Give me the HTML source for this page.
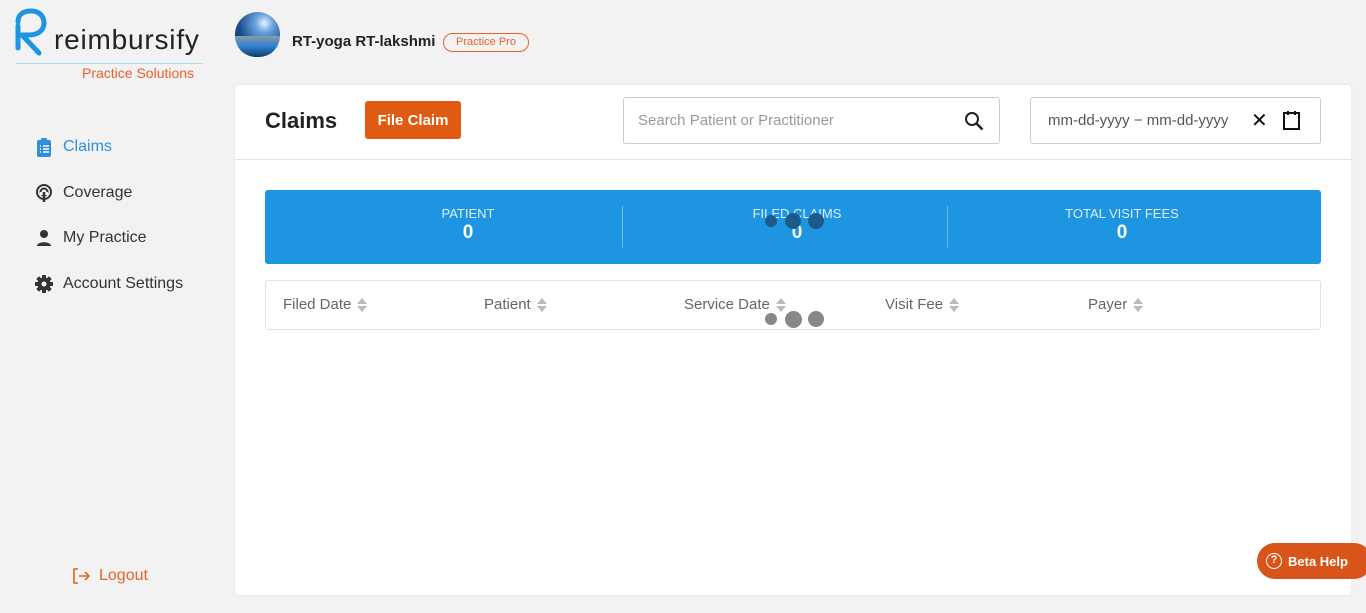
<!DOCTYPE html>
<html><head><meta charset="utf-8"><style>
*{box-sizing:border-box;margin:0;padding:0}
body{width:1366px;height:613px;background:#f2f2f2;font-family:"Liberation Sans",sans-serif;position:relative;overflow:hidden;color:#222}
.abs{position:absolute}
.nav{position:absolute;left:35px;font-size:16px;color:#333;display:flex;align-items:center}
.nav svg{margin-right:9px}
.card{position:absolute;left:235px;top:85px;width:1116px;height:510px;background:#fff;border-radius:4px;box-shadow:0 0 3px rgba(0,0,0,.08)}
.inp{position:absolute;border:1px solid #ccc;border-radius:3px;height:47px;top:97px;font-size:15px;color:#999;display:flex;align-items:center;padding-left:14px}
.stat{position:absolute;top:190px;left:265px;width:1056px;height:74px;background:#1e95e0;border-radius:3px;color:#fff}
.col{position:absolute;top:16px;width:330px;text-align:center}
.col .l{font-size:13px;color:#dbeefb}
.col .v{font-size:19px;font-weight:bold;margin-top:1px}
.th{position:absolute;top:296px;font-size:15px;color:#666;display:flex;align-items:center}
.sort{display:inline-block;margin-left:6px;width:10px;height:14px;position:relative}
.sort:before{content:"";position:absolute;top:0;left:0;border-left:5px solid transparent;border-right:5px solid transparent;border-bottom:6px solid #bbb}
.sort:after{content:"";position:absolute;bottom:0;left:0;border-left:5px solid transparent;border-right:5px solid transparent;border-top:6px solid #bbb}
.dot{position:absolute;border-radius:50%}
</style></head><body>
<!-- logo -->
<svg class="abs" style="left:14px;top:8px" width="34" height="52" viewBox="0 0 34 52"><path d="M4 14 C4 6 10 3 17 3 C25 3 30 8 30 15 C30 23 23 27 15 27 L8 27 L25 45" fill="none" stroke="#1e95e0" stroke-width="5" stroke-linecap="round"/><path d="M4 18 L4 40" stroke="#1e95e0" stroke-width="5" stroke-linecap="round"/></svg>
<div class="abs" style="left:54px;top:24px;font-size:28px;color:#222;letter-spacing:.8px">reimbursify</div>
<div class="abs" style="left:16px;top:63px;width:187px;height:1px;background:#b5d8f3"></div>
<div class="abs" style="left:82px;top:65px;font-size:14px;color:#e8622a">Practice Solutions</div>
<div class="abs" style="left:235px;top:12px;width:45px;height:45px;border-radius:50%;background:radial-gradient(circle at 65% 25%,#e8f2ff 0,#6aa5e0 20%,#1f4f8c 55%,#0b2445 100%)"></div>
<div class="abs" style="left:235px;top:36px;width:45px;height:21px;border-radius:0 0 23px 23px;background:linear-gradient(#8a9aa5,#2d7fd0 50%,#123a6a)"></div>
<div class="abs" style="left:292px;top:33px;font-size:15px;font-weight:bold;color:#222">RT-yoga RT-lakshmi</div>
<div class="abs" style="left:443px;top:33px;width:86px;height:19px;border:1px solid #e8622a;border-radius:10px;color:#e8622a;font-size:11px;text-align:center;line-height:17px">Practice Pro</div>
<!-- nav -->
<div class="nav" style="top:137px;color:#2d8fdd"><svg width="19" height="20" viewBox="0 0 19 20"><rect x="2" y="3" width="14" height="17" rx="2" fill="#2d8fdd"/><rect x="6" y="1" width="6" height="4" rx="1" fill="#2d8fdd"/><g stroke="#fff" stroke-width="1.5"><path d="M5 9h1M8 9h6M5 12h1M8 12h6M5 15h1M8 15h6"/></g></svg>Claims</div>
<div class="nav" style="top:183px"><svg width="19" height="20" viewBox="0 0 19 20"><circle cx="9" cy="9" r="7" fill="none" stroke="#333" stroke-width="2"/><circle cx="9" cy="9" r="3.5" fill="none" stroke="#333" stroke-width="2"/><rect x="5" y="9" width="8" height="3" fill="#f2f2f2"/><path d="M9 9v10" stroke="#333" stroke-width="2.5"/></svg>Coverage</div>
<div class="nav" style="top:228px"><svg width="19" height="20" viewBox="0 0 19 20"><circle cx="9" cy="6" r="4" fill="#333"/><path d="M2 18c0-5 14-5 14 0z" fill="#333"/></svg>My Practice</div>
<div class="nav" style="top:274px"><svg width="19" height="20" viewBox="0 0 19 20"><g transform="translate(9 10)"><circle r="6.5" fill="#333"/><g fill="#333"><rect x="-2" y="-9" width="4" height="18"/><rect x="-2" y="-9" width="4" height="18" transform="rotate(45)"/><rect x="-2" y="-9" width="4" height="18" transform="rotate(90)"/><rect x="-2" y="-9" width="4" height="18" transform="rotate(135)"/></g><circle r="2.5" fill="#f2f2f2"/></g></svg>Account Settings</div>
<div class="abs" style="left:72px;top:567px;font-size:16px;color:#e8622a;display:flex;align-items:center"><svg width="20" height="18" viewBox="0 0 20 18" style="margin-right:7px"><path d="M6 2H2v14h4" fill="none" stroke="#e8622a" stroke-width="1.6"/><path d="M7 9h10M13 5l4 4-4 4" fill="none" stroke="#e8622a" stroke-width="1.6"/></svg>Logout</div>
<!-- card -->
<div class="card"></div>
<div class="abs" style="left:235px;top:159px;width:1116px;height:1px;background:#e3e3e3"></div>
<div class="abs" style="left:265px;top:108px;font-size:22px;font-weight:bold;color:#222">Claims</div>
<div class="abs" style="left:365px;top:101px;width:96px;height:38px;background:#e05a12;border-radius:3px;color:#fff;font-size:15px;font-weight:bold;display:flex;align-items:center;justify-content:center">File Claim</div>
<div class="inp" style="left:623px;width:377px">Search Patient or Practitioner<svg class="abs" style="right:14px;top:13px" width="21" height="21" viewBox="0 0 21 21"><circle cx="8" cy="8" r="6" fill="none" stroke="#222" stroke-width="2"/><path d="M12.5 12.5l6 6" stroke="#222" stroke-width="2.5"/></svg></div>
<div class="inp" style="left:1030px;width:291px;color:#555;padding-left:17px">mm-dd-yyyy − mm-dd-yyyy<span class="abs" style="left:220px;top:10px;font-size:20px;color:#111">✕</span><svg class="abs" style="left:252px;top:13px" width="17" height="19" viewBox="0 0 17 19"><rect x="1" y="2" width="15" height="16" fill="none" stroke="#111" stroke-width="2"/><path d="M5 0v4M12 0v4" stroke="#111" stroke-width="2"/></svg></div>
<div class="stat">
<div class="col" style="left:38px"><div class="l">PATIENT</div><div class="v">0</div></div>
<div class="abs" style="left:357px;top:16px;width:1px;height:42px;background:#6cb9ec"></div>
<div class="col" style="left:367px"><div class="l">FILED CLAIMS</div><div class="v">0</div></div>
<div class="abs" style="left:682px;top:16px;width:1px;height:42px;background:#6cb9ec"></div>
<div class="col" style="left:692px"><div class="l">TOTAL VISIT FEES</div><div class="v">0</div></div>
</div>
<div class="dot" style="left:765px;top:215px;width:12px;height:12px;background:#1d5a8a"></div>
<div class="dot" style="left:785px;top:213px;width:16px;height:16px;background:#1d5a8a"></div>
<div class="dot" style="left:808px;top:213px;width:16px;height:16px;background:#1d5a8a"></div>
<div class="abs" style="left:265px;top:280px;width:1056px;height:50px;border:1px solid #e3e3e3;border-radius:3px"></div>
<div class="th" style="left:283px">Filed Date<span class="sort"></span></div>
<div class="th" style="left:484px">Patient<span class="sort"></span></div>
<div class="th" style="left:684px">Service Date<span class="sort"></span></div>
<div class="th" style="left:885px">Visit Fee<span class="sort"></span></div>
<div class="th" style="left:1088px">Payer<span class="sort"></span></div>
<div class="dot" style="left:765px;top:313px;width:12px;height:12px;background:#888"></div>
<div class="dot" style="left:785px;top:311px;width:17px;height:17px;background:#888"></div>
<div class="dot" style="left:808px;top:311px;width:16px;height:16px;background:#888"></div>
<div class="abs" style="left:1257px;top:543px;width:115px;height:36px;background:#d9541a;border-radius:18px;color:#fff;font-size:13px;font-weight:bold;display:flex;align-items:center;padding-left:9px"><span style="width:16px;height:16px;border:1.5px solid #fff;border-radius:50%;font-size:11px;text-align:center;line-height:13px;margin-right:6px">?</span>Beta Help</div>
</body></html>
